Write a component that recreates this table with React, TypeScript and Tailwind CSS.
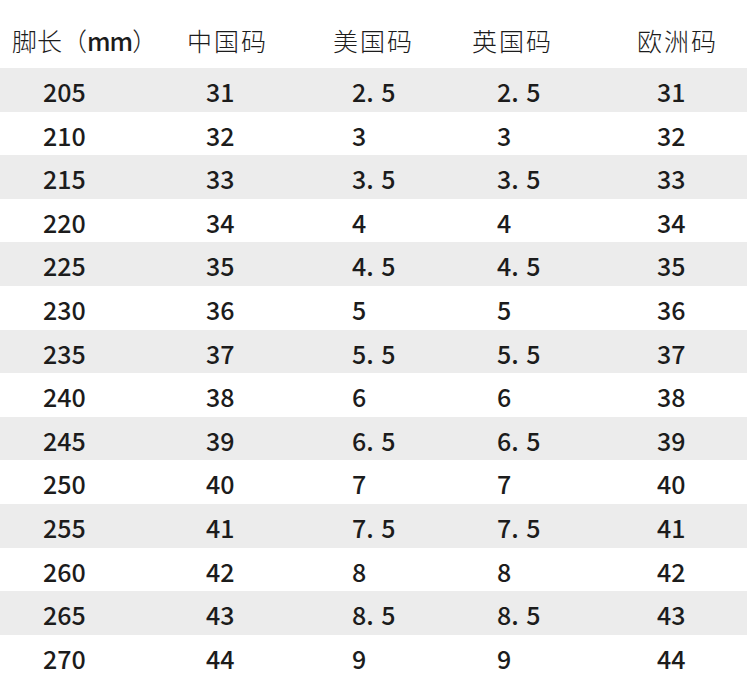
const rows: [string, string, string, string, string][] = [
  ["205", "31", "2.5", "2.5", "31"],
  ["210", "32", "3", "3", "32"],
  ["215", "33", "3.5", "3.5", "33"],
  ["220", "34", "4", "4", "34"],
  ["225", "35", "4.5", "4.5", "35"],
  ["230", "36", "5", "5", "36"],
  ["235", "37", "5.5", "5.5", "37"],
  ["240", "38", "6", "6", "38"],
  ["245", "39", "6.5", "6.5", "39"],
  ["250", "40", "7", "7", "40"],
  ["255", "41", "7.5", "7.5", "41"],
  ["260", "42", "8", "8", "42"],
  ["265", "43", "8.5", "8.5", "43"],
  ["270", "44", "9", "9", "44"],
];

const cols = "grid grid-cols-[142px_158px_150px_150px_150px]";

function Num({ v }: { v: string }) {
  const [a, b] = v.split(".");
  if (b === undefined) return <>{v}</>;
  return (
    <>
      {a}
      <span className="inline-block w-[0.6em]">.</span>
      {b}
    </>
  );
}

export default function App() {
  return (
    <div
      className="w-[750px] h-[680px] overflow-hidden bg-white text-[#1c1c1c]"
      style={{ fontFamily: '"Noto Sans CJK SC", "Noto Sans", sans-serif' }}
    >
      <div className={`${cols} h-[68px] items-center pt-[14px] text-[25px] font-light tracking-[2px]`}>
        <div className="pl-[12px] whitespace-nowrap tracking-[0px]">
          脚长（<span className="font-medium tracking-[-1px]">mm</span>）
        </div>
        <div className="pl-[45px]">中国码</div>
        <div className="pl-[33px]">美国码</div>
        <div className="pl-[22px]">英国码</div>
        <div className="pl-[37px]">欧洲码</div>
      </div>
      {rows.map((r, i) => (
        <div
          key={r[0]}
          className={`${cols} h-[43.6px] w-[747px] items-center pt-[4px] text-[25px] font-medium ${
            i % 2 === 0 ? "bg-[#ececec]" : "bg-white"
          }`}
        >
          <div className="pl-[43px]">{r[0]}</div>
          <div className="pl-[64px]">{r[1]}</div>
          <div className="pl-[52px]">
            <Num v={r[2]} />
          </div>
          <div className="pl-[47px]">
            <Num v={r[3]} />
          </div>
          <div className="pl-[57px]">{r[4]}</div>
        </div>
      ))}
    </div>
  );
}
